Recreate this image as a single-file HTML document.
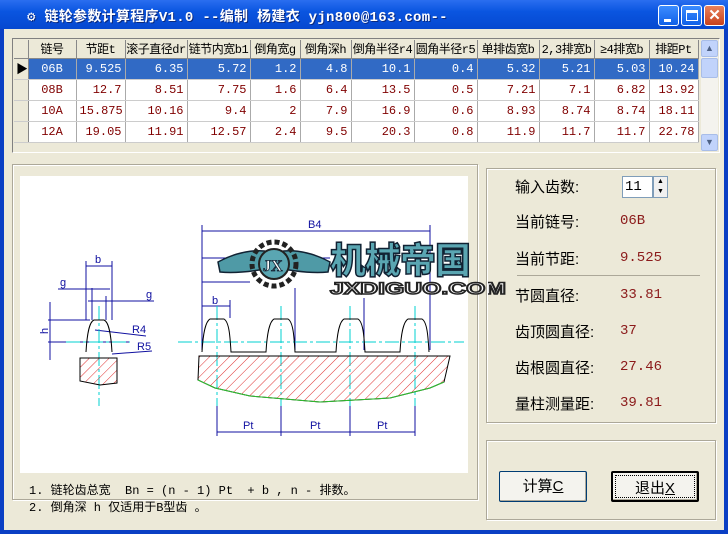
<!DOCTYPE html>
<html><head><meta charset="utf-8"><style>
*{margin:0;padding:0;box-sizing:border-box}
body{width:728px;height:534px;overflow:hidden;background:#0a3fc4;font-family:"Liberation Sans","Noto Sans CJK SC",sans-serif;position:relative}
.title{position:absolute;left:0;top:0;width:728px;height:29px;background:linear-gradient(#2a6ef0,#0a55e0 40%,#0648d0);color:#fff;font:bold 14px "Liberation Mono","Noto Sans CJK SC",monospace;}
.title span{position:absolute;left:27px;top:6px;letter-spacing:0.3px;text-shadow:1px 1px #0a2a80}
.client{position:absolute;left:4px;top:29px;width:720px;height:501px;background:#ece9d8}
.a{position:absolute}
.tb{position:absolute;top:5px;width:21px;height:21px;border:1px solid #fff;border-radius:3px;background:linear-gradient(#3c8cff,#1060e8)}
table{border-collapse:collapse;font:12px "Liberation Mono","Noto Sans CJK SC",monospace}
td{height:21px;border-right:1px solid #aaa;border-bottom:1px solid #ccc;padding:0 3px;text-align:right;color:#800000;background:#fff;white-space:nowrap;overflow:hidden}
td.f{text-align:center}
th{height:18px;background:#ece9d8;border-right:1px solid #888;border-bottom:1px solid #888;font-weight:normal;color:#000;padding:0;white-space:nowrap;overflow:hidden;font-size:12px;letter-spacing:-0.5px}
tr.s td{background:#316ac5;color:#fff}
td.i{background:#ece9d8!important;border-right:1px solid #888}
.grp{position:absolute;border:1px solid #aca899;box-shadow:inset 1px 1px #fff,1px 1px #fff}
.lab{position:absolute;font:15px "Liberation Sans","Noto Sans CJK SC",sans-serif;color:#000}
.val{position:absolute;font:14px "Liberation Mono",monospace;color:#8b1a1a}
.btn{position:absolute;background:#f4f3ee;border:1px solid #003c74;border-radius:2px;font:15px "Liberation Sans","Noto Sans CJK SC",sans-serif;text-align:center;line-height:29px;box-shadow:inset -1px -1px #aca899}
</style></head><body>
<div class="title"><span>&#9881; 链轮参数计算程序V1.0  --编制 杨建衣 yjn800@163.com--</span>
<div class="tb" style="left:658px"><div class="a" style="left:5px;top:13px;width:7px;height:3px;background:#fff"></div></div>
<div class="tb" style="left:681px"><div class="a" style="left:4px;top:4px;width:12px;height:11px;border:1px solid #fff;border-top-width:3px"></div></div>
<div class="tb" style="left:704px;background:linear-gradient(#e8815c,#c8411c);color:#fff;font:bold 15px sans-serif;text-align:center;line-height:19px">✕</div>
</div>
<div class="client">
<div class="a" style="left:8px;top:9px;width:708px;height:115px;border:1px solid #808080;border-right-color:#fff;border-bottom-color:#fff;background:#ece9d8">
<table style="position:absolute;left:1px;top:1px;table-layout:fixed;width:684px">
<colgroup><col style="width:14px"><col style="width:48px"><col style="width:49px"><col style="width:62px"><col style="width:63px"><col style="width:50px"><col style="width:51px"><col style="width:63px"><col style="width:63px"><col style="width:62px"><col style="width:55px"><col style="width:55px"><col style="width:49px"></colgroup>
<tr><th></th><th>链号</th><th>节距t</th><th>滚子直径dr</th><th>链节内宽b1</th><th>倒角宽g</th><th>倒角深h</th><th>倒角半径r4</th><th>圆角半径r5</th><th>单排齿宽b</th><th>2,3排宽b</th><th>≥4排宽b</th><th>排距Pt</th></tr>
<tr class="s"><td class="i" style="color:#000;text-align:left;padding:0 2px">▶</td><td class="f">06B</td><td>9.525</td><td>6.35</td><td>5.72</td><td>1.2</td><td>4.8</td><td>10.1</td><td>0.4</td><td>5.32</td><td>5.21</td><td>5.03</td><td>10.24</td></tr>
<tr><td class="i"></td><td class="f">08B</td><td>12.7</td><td>8.51</td><td>7.75</td><td>1.6</td><td>6.4</td><td>13.5</td><td>0.5</td><td>7.21</td><td>7.1</td><td>6.82</td><td>13.92</td></tr>
<tr><td class="i"></td><td class="f">10A</td><td>15.875</td><td>10.16</td><td>9.4</td><td>2</td><td>7.9</td><td>16.9</td><td>0.6</td><td>8.93</td><td>8.74</td><td>8.74</td><td>18.11</td></tr>
<tr><td class="i"></td><td class="f">12A</td><td>19.05</td><td>11.91</td><td>12.57</td><td>2.4</td><td>9.5</td><td>20.3</td><td>0.8</td><td>11.9</td><td>11.7</td><td>11.7</td><td>22.78</td></tr>
</table>
<div class="a" style="left:688px;top:1px;width:17px;height:111px;background:#f4f3ee">
<div class="a" style="left:0;top:0;width:17px;height:17px;background:#c1d3fb;border:1px solid #a8bde8;border-radius:2px;color:#4d6185;font-size:9px;text-align:center;line-height:15px">▲</div>
<div class="a" style="left:0;top:18px;width:17px;height:20px;background:#c1d3fb;border:1px solid #a8bde8;border-radius:2px"></div>
<div class="a" style="left:0;top:94px;width:17px;height:17px;background:#c1d3fb;border:1px solid #a8bde8;border-radius:2px;color:#4d6185;font-size:9px;text-align:center;line-height:15px">▼</div>
</div>
</div>
<div class="grp" style="left:8px;top:135px;width:466px;height:336px"></div>
<div class="a" style="left:16px;top:147px;width:448px;height:297px;background:#fff"></div>
<svg class="a" style="left:-4px;top:-29px" width="728" height="534" viewBox="0 0 728 534">
<g transform="translate(0,170)">
<g stroke="#1010a0" stroke-width="1" fill="none">
<line x1="202" y1="55" x2="202" y2="180"/><line x1="430" y1="55" x2="430" y2="180"/>
<line x1="202" y1="61" x2="430" y2="61"/><line x1="202" y1="88" x2="330" y2="88"/><line x1="202" y1="112" x2="250" y2="112"/>
<line x1="202" y1="136" x2="230" y2="136"/><line x1="230" y1="130" x2="230" y2="148"/>
<line x1="295" y1="118" x2="295" y2="180"/><line x1="364" y1="128" x2="364" y2="180"/>
<line x1="217" y1="236" x2="217" y2="266"/><line x1="281" y1="236" x2="281" y2="266"/><line x1="350" y1="236" x2="350" y2="266"/><line x1="415" y1="236" x2="415" y2="266"/>
<line x1="217" y1="262" x2="415" y2="262"/>
<line x1="86" y1="91" x2="86" y2="150"/><line x1="112" y1="91" x2="112" y2="150"/><line x1="86" y1="96" x2="112" y2="96"/>
<line x1="92" y1="118" x2="92" y2="150"/><line x1="106" y1="126" x2="106" y2="150"/>
<line x1="58" y1="119" x2="110" y2="119"/><line x1="88" y1="131" x2="154" y2="131"/>
<line x1="50" y1="132" x2="50" y2="190"/><line x1="48" y1="150" x2="90" y2="150"/><line x1="48" y1="172" x2="130" y2="172"/>
<line x1="95" y1="160" x2="146" y2="166"/><line x1="112" y1="184" x2="152" y2="181"/>
</g>
<g fill="#1010a0" font-family="Liberation Sans,sans-serif" font-size="11">
<text x="308" y="58">B4</text><text x="95" y="93">b</text><text x="60" y="116">g</text><text x="146" y="128">g</text><text x="212" y="134">b</text>
<text x="132" y="163">R4</text><text x="137" y="180">R5</text><text x="243" y="259">Pt</text><text x="310" y="259">Pt</text><text x="377" y="259">Pt</text>
<text x="44" y="168" transform="rotate(-90 44 164)">h</text>
</g>
<g stroke="#00d0d0" stroke-width="1" stroke-dasharray="14,3,3,3" fill="none">
<line x1="178" y1="172" x2="464" y2="172"/><line x1="66" y1="172" x2="130" y2="172"/>
<line x1="99" y1="136" x2="99" y2="236"/><line x1="217" y1="136" x2="217" y2="236"/><line x1="281" y1="136" x2="281" y2="236"/><line x1="350" y1="136" x2="350" y2="236"/><line x1="415" y1="136" x2="415" y2="236"/>
</g>
<defs><pattern id="h" width="7" height="7" patternUnits="userSpaceOnUse" patternTransform="rotate(45)"><line x1="0" y1="0" x2="0" y2="7" stroke="#e03030" stroke-width="1"/></pattern></defs>
<path d="M199 186 L450 186 L444 212 L430 218 L390 228 L320 232 L250 226 L215 218 L198 210 Z" fill="url(#h)" stroke="#000" stroke-width="1"/>
<path d="M198 210 L215 218 L250 226 L320 232 L390 228 L430 218 L444 212" stroke="#30c030" fill="none"/>
<path d="M80 188 L117 188 L117 213 L100 215 L80 211 Z" fill="url(#h)" stroke="#000"/>
<g stroke="#000" fill="none">
<path d="M86 182 C87 165 89 152 94 150 L104 150 C109 152 111 165 112 182"/>
<path d="M202 182 C203 165 205 152 210 149 L224 149 C229 152 230 165 231 182 L266 182 C267 165 269 152 274 149 L288 149 C293 152 294 165 295 182 L336 182 C337 165 339 152 344 149 L358 149 C363 152 364 165 365 182 L400 182 C401 165 403 152 408 149 L422 149 C427 152 428 165 429 182"/>
</g>
</g>
<g>
<path d="M218 262 C240 250 262 248 278 254 L280 266 C262 270 240 274 220 272 Z" fill="#4f9aa6" stroke="#123" stroke-width="1.5"/>
<path d="M330 262 C308 250 286 248 270 254 L268 266 C286 270 308 274 328 272 Z" fill="#4f9aa6" stroke="#123" stroke-width="1.5"/>
<circle cx="274" cy="264" r="22" fill="none" stroke="#222" stroke-width="5" stroke-dasharray="5,3"/>
<circle cx="274" cy="264" r="15" fill="#5aa6b2" stroke="#222" stroke-width="2"/>
<text x="263" y="271" font-family="Liberation Serif,serif" font-weight="bold" font-size="16" fill="#fff" stroke="#123" stroke-width="0.8">JX</text>
<text x="330" y="273" font-family="Noto Sans CJK SC,sans-serif" font-weight="900" font-size="36" fill="#5aa6b2" stroke="#123" stroke-width="1.5" letter-spacing="-1">机械帝国</text>
<text x="330" y="294" font-family="Liberation Sans,sans-serif" font-weight="bold" font-size="17" fill="#fff" stroke="#222" stroke-width="1.5" textLength="176" lengthAdjust="spacingAndGlyphs">JXDIGUO.COM</text>
</g>
</svg>
<div class="a" style="left:25px;top:452px;font:12px 'Liberation Mono','Noto Sans CJK SC',monospace;white-space:pre">1. 链轮齿总宽  Bn = (n - 1) Pt  + b , n - 排数。</div>
<div class="a" style="left:25px;top:469px;font:12px 'Liberation Mono','Noto Sans CJK SC',monospace;white-space:pre">2. 倒角深 h 仅适用于B型齿 。</div>
<div class="grp" style="left:482px;top:139px;width:230px;height:255px"></div>
<div class="a" style="left:513px;top:246px;width:183px;height:1px;background:#aca899"></div>
<div class="grp" style="left:482px;top:411px;width:230px;height:80px"></div>
<div class="lab" style="left:511px;top:147px">输入齿数:</div>
<div class="a" style="left:618px;top:147px;width:31px;height:22px;background:#fff;border:1px solid #7f9db9;font:14px 'Liberation Mono',monospace;padding:2px 2px">11</div>
<div class="a" style="left:649px;top:147px;width:15px;height:22px;border:1px solid #7f9db9;background:#f0f0f0;font-size:7px;line-height:10px;text-align:center">▲<br>▼</div>
<div class="lab" style="left:511px;top:182px">当前链号:</div><div class="val" style="left:616px;top:184px">06B</div>
<div class="lab" style="left:511px;top:219px">当前节距:</div><div class="val" style="left:616px;top:221px">9.525</div>
<div class="lab" style="left:511px;top:256px">节圆直径:</div><div class="val" style="left:616px;top:258px">33.81</div>
<div class="lab" style="left:511px;top:292px">齿顶圆直径:</div><div class="val" style="left:616px;top:294px">37</div>
<div class="lab" style="left:511px;top:328px">齿根圆直径:</div><div class="val" style="left:616px;top:330px">27.46</div>
<div class="lab" style="left:511px;top:364px">量柱测量距:</div><div class="val" style="left:616px;top:366px">39.81</div>
<div class="btn" style="left:495px;top:442px;width:88px;height:31px">计算<u>C</u></div>
<div class="btn" style="left:607px;top:442px;width:88px;height:31px;border:2px solid #000;line-height:25px"><div style="border:1px dotted #000;margin:2px;height:23px">退出<u>X</u></div></div>
</div>
</body></html>
